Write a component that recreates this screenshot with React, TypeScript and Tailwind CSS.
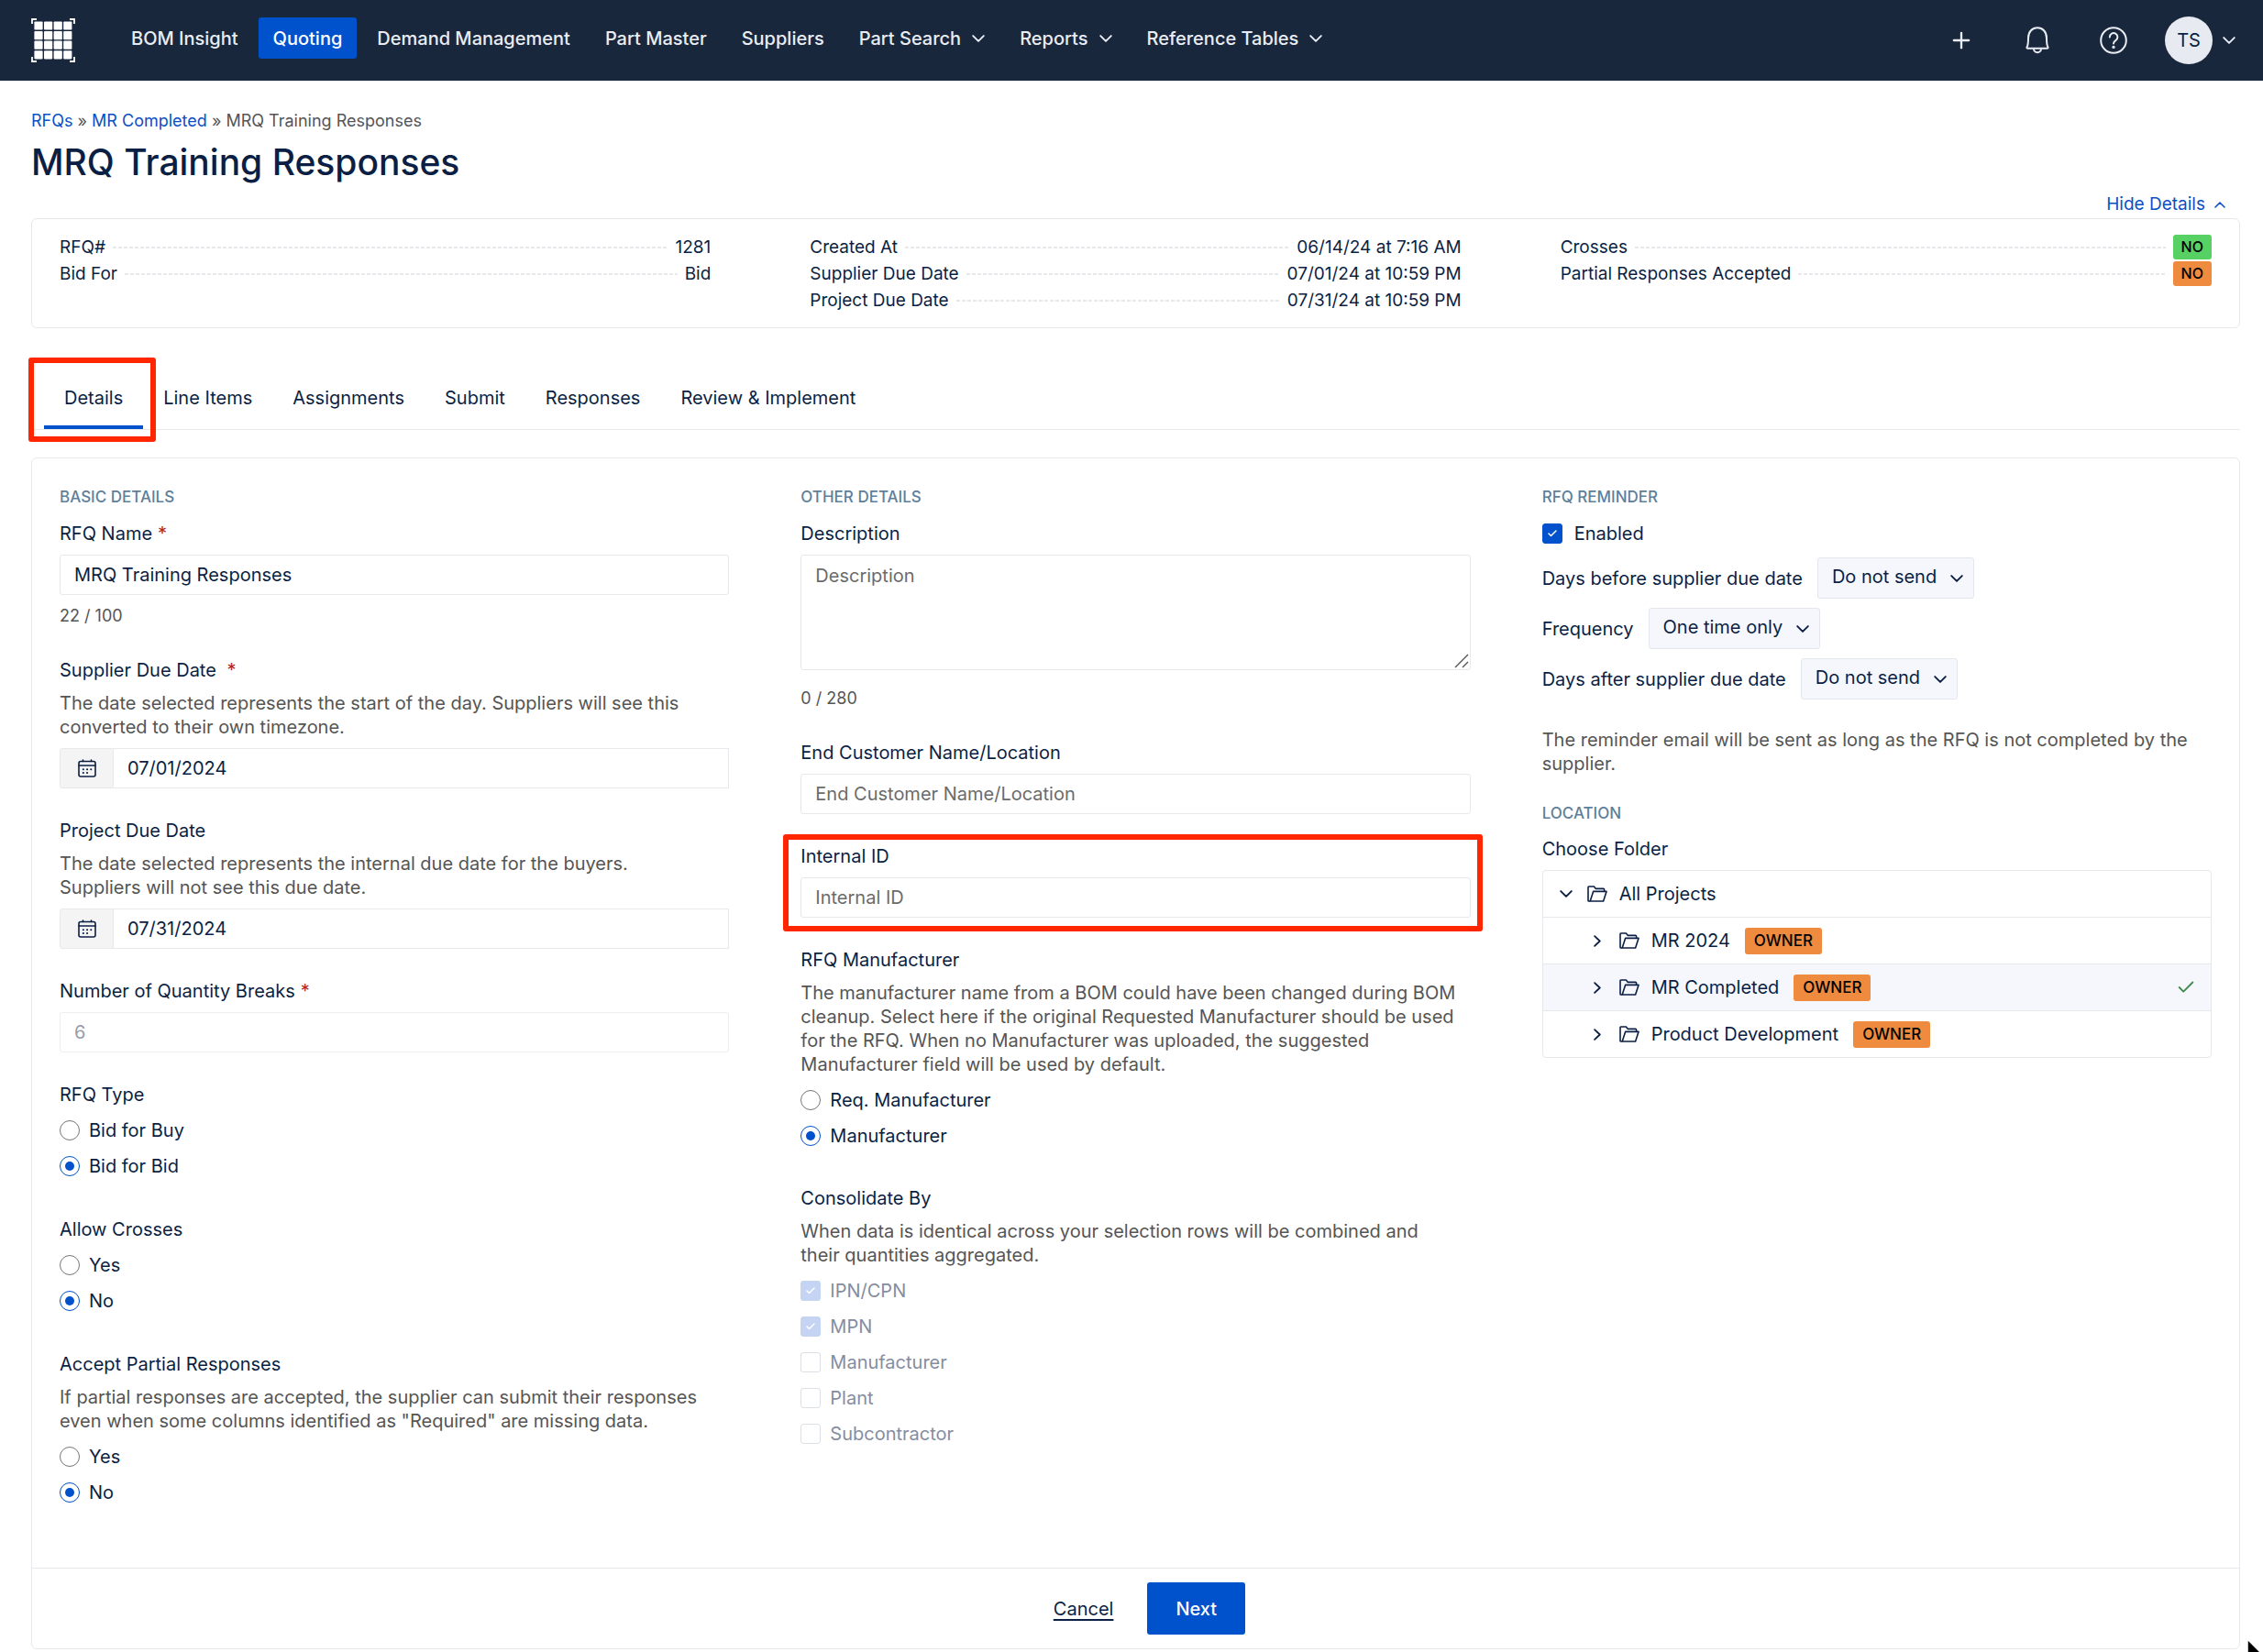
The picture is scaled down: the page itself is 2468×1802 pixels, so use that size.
import React, { useState } from 'react';
import { Check, Plus } from 'lucide-react';

type NavItem = { label: string; active?: boolean; menu?: boolean };
type SummaryRow = { label: string; value: string; badge?: 'green' | 'orange' };

const navItems: NavItem[] = [
  { label: 'BOM Insight' },
  { label: 'Quoting', active: true },
  { label: 'Demand Management' },
  { label: 'Part Master' },
  { label: 'Suppliers' },
  { label: 'Part Search', menu: true },
  { label: 'Reports', menu: true },
  { label: 'Reference Tables', menu: true },
];

const summary: SummaryRow[][] = [
  [
    { label: 'RFQ#', value: '1281' },
    { label: 'Bid For', value: 'Bid' },
  ],
  [
    { label: 'Created At', value: '06/14/24 at 7:16 AM' },
    { label: 'Supplier Due Date', value: '07/01/24 at 10:59 PM' },
    { label: 'Project Due Date', value: '07/31/24 at 10:59 PM' },
  ],
  [
    { label: 'Crosses', value: 'NO', badge: 'green' },
    { label: 'Partial Responses Accepted', value: 'NO', badge: 'orange' },
  ],
];

const tabs = ['Details', 'Line Items', 'Assignments', 'Submit', 'Responses', 'Review & Implement'];

const folders = ['MR 2024', 'MR Completed', 'Product Development'];

const inputClass = 'block h-11 w-full rounded-[3px] border border-[#e6e8ec] bg-white px-[15px] text-[20px] leading-[26px] outline-none placeholder:text-[#6b6b6b]';

function Logo() {
  const cells = [0, 1, 2, 3];
  return (
    <svg viewBox="0 0 48 48" className="size-12" aria-hidden="true">
      <g fill="#fff">
        {cells.map(r => cells.map(c => (
          <rect key={`${r}-${c}`} x={3.4 + c * 10.6} y={3.4 + r * 10.6} width="9.2" height="9.2" rx="0.8" />
        )))}
      </g>
      <path d="M1 6V1h5M42 1h5v5M47 42v5h-5M6 47H1v-5" fill="none" stroke="#fff" strokeWidth="1.8" />
    </svg>
  );
}

function ChevronDown({ className = '' }: { className?: string }) {
  return (
    <svg viewBox="0 0 14 8" className={`h-2 w-[14px] shrink-0 ${className}`} fill="none" stroke="currentColor" strokeWidth="1.9" strokeLinecap="round" strokeLinejoin="round">
      <path d="M1.2 1.1 7 6.9l5.8-5.8" />
    </svg>
  );
}

function ChevronUp() {
  return (
    <svg viewBox="0 0 12 7" className="h-[7px] w-3" fill="none" stroke="currentColor" strokeWidth="1.6" strokeLinecap="round" strokeLinejoin="round">
      <path d="M1 6l5-5 5 5" />
    </svg>
  );
}

function ChevronRight() {
  return (
    <svg viewBox="0 0 8 13" className="h-[13px] w-2 shrink-0" fill="none" stroke="currentColor" strokeWidth="1.8" strokeLinecap="round" strokeLinejoin="round">
      <path d="M1.1 1.1 6.8 6.5l-5.7 5.4" />
    </svg>
  );
}

function BellIcon() {
  return (
    <svg viewBox="0 0 26 30" className="h-[30px] w-[26px]" fill="none" stroke="currentColor" strokeWidth="2" strokeLinejoin="round">
      <path d="M2.4 23.8c-.9 0-1.2-.8-.8-1.5C3 20 3 17.5 3 12.5 3 5.5 7.5 1.3 13 1.3s10 4.2 10 11.2c0 5 0 7.5 1.4 9.8.4.7.1 1.5-.8 1.5z" />
      <path d="M9 24.2a4 4 0 0 0 8 0" />
    </svg>
  );
}

function HelpIcon() {
  return (
    <svg viewBox="0 0 30 30" className="size-[30px]" fill="none" stroke="currentColor" strokeWidth="2" strokeLinecap="round">
      <circle cx="15" cy="15" r="13.8" />
      <path d="M10.8 11.4a4.3 4.3 0 1 1 6.5 3.7c-1.5.9-2.3 1.7-2.3 3.4" />
      <circle cx="15" cy="22.4" r="0.7" fill="currentColor" />
    </svg>
  );
}

function CalendarIcon() {
  return (
    <svg viewBox="0 0 20 20" className="size-5" fill="none" stroke="currentColor" strokeWidth="1.6" strokeLinecap="round" strokeLinejoin="round">
      <rect x="1" y="2.5" width="18" height="16.5" rx="2" />
      <path d="M1 7h18M5.5 1v1.5M14.5 1v1.5" />
      <path d="M5.8 11.2h.1M10 11.2h.1M14.2 11.2h.1M5.8 15h.1M10 15h.1" strokeWidth="2" />
    </svg>
  );
}

function FolderIcon() {
  return (
    <svg viewBox="0 0 22 18" className="h-[18px] w-[22px] shrink-0" fill="none" stroke="currentColor" strokeWidth="1.6" strokeLinejoin="round">
      <path d="M3.2 17 6.6 6.4H21L17.6 17z" />
      <path d="M3.2 17H1.8a.8.8 0 0 1-.8-.8V1.8A.8.8 0 0 1 1.8 1h5.6l2 2.4h8.2a1 1 0 0 1 1 1v2" />
    </svg>
  );
}

function Badge({ tone, children }: { tone: 'green' | 'orange'; children: React.ReactNode }) {
  return (
    <span className={`inline-flex h-[27px] items-center rounded-[3px] px-[9px] text-[16px] font-medium text-black ${tone === 'green' ? 'bg-[#57d163]' : 'bg-[#ef8b3f]'}`}>
      {children}
    </span>
  );
}

function Heading({ children }: { children: React.ReactNode }) {
  return <h2 className="text-[17px] leading-[26px] font-medium text-[#5d7f9b] uppercase">{children}</h2>;
}

function Help({ className = '', children }: { className?: string; children: React.ReactNode }) {
  return <p className={`mt-[10px] text-[20px] leading-[26px] text-[#555] ${className}`}>{children}</p>;
}

function Required() {
  return <span className="ml-[6px] text-[#b3261e]">*</span>;
}

function DateInput({ id, defaultValue }: { id: string; defaultValue: string }) {
  return (
    <div className="mt-[10px] flex">
      <button type="button" aria-label="Open calendar" className="flex h-11 w-[59px] items-center justify-center rounded-l-[3px] border border-[#e6e8ec] bg-[#f4f4f5]">
        <CalendarIcon />
      </button>
      <input id={id} type="text" defaultValue={defaultValue} className="h-11 min-w-0 flex-1 border border-l-0 border-[#e6e8ec] bg-white px-[15px] text-[20px] outline-none" />
    </div>
  );
}

function RadioList({ name, options, selected }: { name: string; options: string[]; selected: string }) {
  return (
    <div className="mt-[13px] flex flex-col gap-[13px]">
      {options.map(o => (
        <label key={o} className="flex items-center gap-[10px]">
          <input type="radio" name={name} value={o} defaultChecked={o === selected}
            className="size-[22px] appearance-none rounded-full border border-[#767676] bg-white bg-clip-content p-[5px] checked:border-[#0052cc] checked:bg-[#0052cc]" />
          {o}
        </label>
      ))}
    </div>
  );
}

function Checkbox({ label, checked, disabled }: { label: string; checked?: boolean; disabled?: boolean }) {
  return (
    <label className={`flex items-center ${disabled ? 'gap-[10px] text-[#858d9f]' : 'gap-[13px]'}`}>
      <span className="relative flex">
        <input type="checkbox" defaultChecked={checked} disabled={disabled}
          className="size-[22px] appearance-none rounded-[3px] border border-[#767676] bg-white checked:border-[#0052cc] checked:bg-[#0052cc] disabled:border-[#dcdfe4] disabled:checked:border-[#c5d4f3] disabled:checked:bg-[#c5d4f3]" />
        {checked && <Check className="pointer-events-none absolute inset-[5px] size-3 text-white" strokeWidth={3} />}
      </span>
      {label}
    </label>
  );
}

function InlineSelect({ label, id, options }: { label: string; id: string; options: string[] }) {
  return (
    <div className="flex items-center gap-4">
      <label htmlFor={id}>{label}</label>
      <div className="relative">
        <select id={id} className="block h-[45px] appearance-none rounded-[3px] border border-[#e4e6ee] bg-[#f6f7fd] pr-10 pb-1 pl-[15px] text-[20px] outline-none field-sizing-content">
          {options.map(o => <option key={o}>{o}</option>)}
        </select>
        <ChevronDown className="pointer-events-none absolute top-[19px] right-3" />
      </div>
    </div>
  );
}

function TopBar() {
  return (
    <header className="flex h-[88px] items-center bg-[#19273d] pr-[30px] pl-[34px] text-[#e9edf3]">
      <a href="#home" aria-label="Home"><Logo /></a>
      <nav className="mt-[19px] ml-[45px] flex items-center gap-[6px] self-start text-[20px] font-medium">
        {navItems.map(n => (
          <a key={n.label} href="#nav"
            className={`flex h-[45px] items-center gap-3 rounded-[3px] px-4 ${n.active ? 'bg-[#0052cc] text-white' : ''}`}>
            {n.label}
            {n.menu && <ChevronDown />}
          </a>
        ))}
      </nav>
      <div className="ml-auto flex items-center">
        <button type="button" aria-label="Add" className="mr-[56px]"><Plus className="size-7" strokeWidth={2} /></button>
        <button type="button" aria-label="Notifications" className="mr-[55px]"><BellIcon /></button>
        <button type="button" aria-label="Help" className="mr-[41px]"><HelpIcon /></button>
        <button type="button" aria-label="Account" className="flex items-center gap-[11px]">
          <span className="flex size-[52px] items-center justify-center rounded-full bg-[#e7eaf0] text-[20px] text-[#0b1f44]">TS</span>
          <ChevronDown />
        </button>
      </div>
    </header>
  );
}

function Summary() {
  return (
    <section className="grid h-[120px] grid-cols-3 gap-x-[108px] rounded-md border border-[#e6e8ec] px-[30px] pt-4 text-[19px] leading-[29px]">
      {summary.map((col, i) => (
        <dl key={i}>
          {col.map(row => (
            <div key={row.label} className="flex h-[29px] items-center gap-2">
              <dt>{row.label}</dt>
              <span className="h-[2px] flex-1 bg-[repeating-linear-gradient(90deg,#e6e8ec_0_4px,transparent_4px_6px)]" />
              <dd className="flex">{row.badge ? <Badge tone={row.badge}>{row.value}</Badge> : row.value}</dd>
            </div>
          ))}
        </dl>
      ))}
    </section>
  );
}

function BasicDetails() {
  return (
    <div>
      <Heading>Basic Details</Heading>
      <label htmlFor="name" className="mt-[14px] block">RFQ Name<Required /></label>
      <input id="name" type="text" defaultValue="MRQ Training Responses" className={`mt-[10px] ${inputClass}`} />
      <p className="mt-[10px] text-[18px] leading-[26px] text-[#555]">22 / 100</p>

      <label htmlFor="supplier-due" className="mt-[33px] block">Supplier Due Date <Required /></label>
      <Help>The date selected represents the start of the day. Suppliers will see this converted to their own timezone.</Help>
      <DateInput id="supplier-due" defaultValue="07/01/2024" />

      <label htmlFor="project-due" className="mt-[33px] block">Project Due Date</label>
      <Help className="pr-10">The date selected represents the internal due date for the buyers. Suppliers will not see this due date.</Help>
      <DateInput id="project-due" defaultValue="07/31/2024" />

      <label htmlFor="breaks" className="mt-[33px] block">Number of Quantity Breaks<Required /></label>
      <input id="breaks" type="text" defaultValue="6" disabled className={`mt-[10px] text-[#6b7488] opacity-70 ${inputClass}`} />

      <fieldset className="mt-[33px]">
        <legend>RFQ Type</legend>
        <RadioList name="type" options={['Bid for Buy', 'Bid for Bid']} selected="Bid for Bid" />
      </fieldset>
      <fieldset className="mt-[43px]">
        <legend>Allow Crosses</legend>
        <RadioList name="crosses" options={['Yes', 'No']} selected="No" />
      </fieldset>
      <fieldset className="mt-[43px]">
        <legend>Accept Partial Responses</legend>
        <Help>If partial responses are accepted, the supplier can submit their responses even when some columns identified as "Required" are missing data.</Help>
        <RadioList name="partial" options={['Yes', 'No']} selected="No" />
      </fieldset>
    </div>
  );
}

function OtherDetails() {
  return (
    <div>
      <Heading>Other Details</Heading>
      <label htmlFor="description" className="mt-[14px] block">Description</label>
      <div className="relative mt-[10px]">
        <textarea id="description" placeholder="Description"
          className="block h-[126px] w-full resize-none rounded-[3px] border border-[#e6e8ec] px-[15px] py-[9px] text-[20px] leading-[26px] outline-none placeholder:text-[#6b6b6b]" />
        <svg viewBox="0 0 16 16" className="pointer-events-none absolute right-[2px] bottom-[2px] size-4" stroke="#555" strokeWidth="1.4" aria-hidden="true">
          <path d="M1 15 15 1M9 15l6-6" />
        </svg>
      </div>
      <p className="mt-[18px] text-[18px] leading-[26px] text-[#555]">0 / 280</p>

      <label htmlFor="customer" className="mt-[33px] block">End Customer Name/Location</label>
      <input id="customer" type="text" placeholder="End Customer Name/Location" className={`mt-[10px] ${inputClass}`} />

      <div className="relative mt-[33px]">
        <label htmlFor="internal-id" className="block">Internal ID</label>
        <input id="internal-id" type="text" placeholder="Internal ID" className={`mt-[10px] ${inputClass}`} />
        <span className="pointer-events-none absolute -top-[11px] -right-[13px] -bottom-[15px] -left-[19px] rounded-[3px] border-6 border-[#ff2600]" />
      </div>

      <fieldset className="mt-[33px]">
        <legend>RFQ Manufacturer</legend>
        <Help>The manufacturer name from a BOM could have been changed during BOM cleanup. Select here if the original Requested Manufacturer should be used for the RFQ. When no Manufacturer was uploaded, the suggested Manufacturer field will be used by default.</Help>
        <RadioList name="manufacturer" options={['Req. Manufacturer', 'Manufacturer']} selected="Manufacturer" />
      </fieldset>

      <fieldset className="mt-[42px]">
        <legend>Consolidate By</legend>
        <Help className="pr-10">When data is identical across your selection rows will be combined and their quantities aggregated.</Help>
        <div className="mt-[13px] flex flex-col gap-[13px]">
          <Checkbox label="IPN/CPN" checked disabled />
          <Checkbox label="MPN" checked disabled />
          <Checkbox label="Manufacturer" disabled />
          <Checkbox label="Plant" disabled />
          <Checkbox label="Subcontractor" disabled />
        </div>
      </fieldset>
    </div>
  );
}

function ReminderAndLocation() {
  const [folder, setFolder] = useState('MR Completed');
  return (
    <div>
      <Heading>RFQ Reminder</Heading>
      <div className="mt-[14px]"><Checkbox label="Enabled" checked /></div>
      <div className="mt-[13px] flex flex-col gap-[10px]">
        <InlineSelect id="before" label="Days before supplier due date" options={['Do not send']} />
        <InlineSelect id="frequency" label="Frequency" options={['One time only']} />
        <InlineSelect id="after" label="Days after supplier due date" options={['Do not send']} />
      </div>
      <p className="mt-[31px] text-[#555]">The reminder email will be sent as long as the RFQ is not completed by the supplier.</p>

      <div className="mt-7"><Heading>Location</Heading></div>
      <p className="mt-[13px]">Choose Folder</p>
      <ul className="mt-[10px] rounded-[4px] border border-[#e6e8ec]">
        <li className="flex h-[50px] items-center pl-[18px]">
          <ChevronDown />
          <span className="mr-[13px] ml-4"><FolderIcon /></span>
          All Projects
        </li>
        {folders.map(f => (
          <li key={f} className="border-t border-[#e6e8ec]">
            <button type="button" onClick={() => setFolder(f)} className={`flex h-[50px] w-full items-center pr-4 pl-[55px] ${f === folder ? 'bg-[#f6f7fd]' : ''}`}>
              <ChevronRight />
              <span className="mr-[13px] ml-5"><FolderIcon /></span>
              <span className="mr-4">{f}</span>
              <span className="flex h-[29px] items-center rounded-[3px] bg-[#ef8b3f] px-[10px] text-[17px] font-medium text-black">OWNER</span>
              {f === folder && <Check className="ml-auto size-[22px] text-[#3f8a4c]" strokeWidth={2} />}
            </button>
          </li>
        ))}
      </ul>
    </div>
  );
}

export default function App() {
  const [tab, setTab] = useState('Details');
  return (
    <div className="min-h-screen bg-white font-[Inter,'Liberation_Sans',sans-serif] text-[20px] leading-[26px] text-[#0b1f44]">
      <TopBar />
      <main className="pr-[25px] pl-[34px]">
        <nav className="pt-[31px] text-[18px] text-[#555]">
          <a href="#rfqs" className="text-[#0b50c4]">RFQs</a> » <a href="#completed" className="text-[#0b50c4]">MR Completed</a> » MRQ Training Responses
        </nav>
        <h1 className="mt-2 text-[39px] leading-[48px] font-medium">MRQ Training Responses</h1>
        <div className="mt-[9px] flex justify-end pr-4 pb-[2px]">
          <button type="button" className="flex items-center gap-[10px] text-[19px] text-[#0b50c4]">
            Hide Details <ChevronUp />
          </button>
        </div>
        <Summary />

        <div role="tablist" className="mt-[39px] flex border-b border-[#e6e8ec] pl-[14px]">
          {tabs.map(t => (
            <button key={t} type="button" role="tab" aria-selected={t === tab} onClick={() => setTab(t)}
              className={`relative h-[71px] border-b-4 px-[22px] pt-[6px] ${t === tab ? 'border-[#0052cc]' : 'border-transparent'}`}>
              {t}
              {t === 'Details' && <span className="pointer-events-none absolute -top-[7px] -right-[14px] -bottom-[18px] -left-[17px] rounded-[3px] border-6 border-[#ff2600]" />}
            </button>
          ))}
        </div>

        <form className="mt-[30px] rounded-md border border-[#e6e8ec]">
          <div className="grid grid-cols-3 gap-x-[78px] px-[30px] pt-[29px] pb-[69px]">
            <BasicDetails />
            <OtherDetails />
            <ReminderAndLocation />
          </div>
          <div className="flex items-center justify-center gap-[37px] border-t border-[#e6e8ec] py-[15px] pl-[30px]">
            <a href="#cancel" className="underline underline-offset-4">Cancel</a>
            <button type="button" className="h-[57px] rounded-[3px] bg-[#0052cc] px-[31px] font-medium text-white">Next</button>
          </div>
        </form>
      </main>
      <svg viewBox="0 0 19 16" className="pointer-events-none fixed right-0 bottom-0 h-4 w-[19px]" aria-hidden="true">
        <path d="M2 2v20h20z" fill="#000" stroke="#fff" strokeWidth="1.5" />
      </svg>
    </div>
  );
}
